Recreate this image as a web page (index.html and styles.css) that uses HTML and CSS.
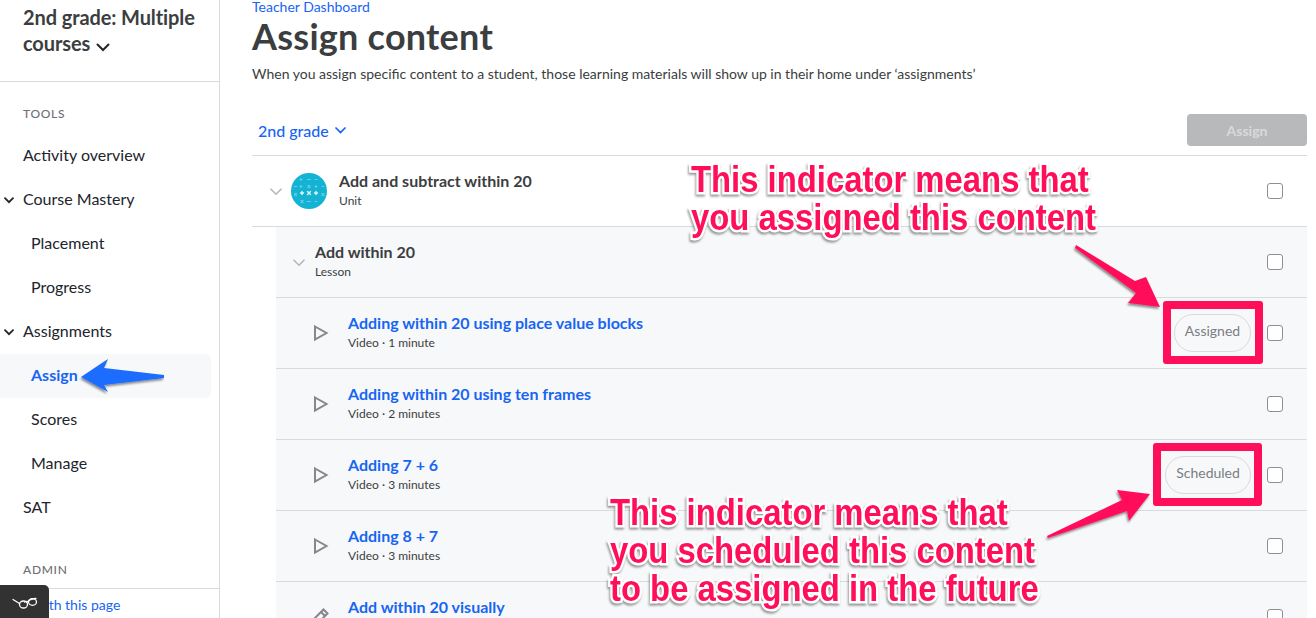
FILE: index.html
```html
<!DOCTYPE html>
<html lang="en">
<head>
<meta charset="utf-8">
<title>Assign content</title>
<link rel="stylesheet" href="styles.css">
</head>
<body>
<div class="page">
  <aside class="sidebar">
    <div class="course">
      <div class="course-name">2nd grade: Multiple courses
        <svg class="course-caret" width="14" height="9" viewBox="0 0 14 9"><path d="M1.500 1.500 7 7l5.500-5.500" fill="none" stroke="#21242c" stroke-width="2" stroke-linecap="round"/></svg>
      </div>
    </div>
    <nav class="nav">
      <div class="nav-heading">TOOLS</div>
      <a class="nav-item">Activity overview</a>
      <a class="nav-item nav-parent"><svg class="nav-caret" width="10" height="7" viewBox="0 0 10 7"><path d="M1 1.200 5 5.200l4-4" fill="none" stroke="#21242c" stroke-width="1.800" stroke-linecap="round"/></svg>Course Mastery</a>
      <a class="nav-item nav-sub">Placement</a>
      <a class="nav-item nav-sub">Progress</a>
      <a class="nav-item nav-parent"><svg class="nav-caret" width="10" height="7" viewBox="0 0 10 7"><path d="M1 1.200 5 5.200l4-4" fill="none" stroke="#21242c" stroke-width="1.800" stroke-linecap="round"/></svg>Assignments</a>
      <a class="nav-item nav-sub nav-active">Assign</a>
      <a class="nav-item nav-sub">Scores</a>
      <a class="nav-item nav-sub">Manage</a>
      <a class="nav-item">SAT</a>
      <div class="nav-heading nav-heading-admin">ADMIN</div>
    </nav>
    <div class="help"><a class="help-link">Help with this page</a></div>
    <div class="glasses">
      <svg width="26" height="14" viewBox="0 0 26 14"><path d="M1 4.500 7.500 8.500M16 7c-1.500-.8-2.500-.8-3.500 0M16 6.500c1.500-1.800 4.500-3 8-3" fill="none" stroke="#fff" stroke-width="1.300" stroke-linecap="round"/><ellipse cx="11.500" cy="9.500" rx="4" ry="3.500" fill="none" stroke="#fff" stroke-width="1.300"/><ellipse cx="20.500" cy="7" rx="4" ry="3.300" fill="none" stroke="#fff" stroke-width="1.300"/></svg>
    </div>
  </aside>

  <main class="main">
    <a class="crumb">Teacher Dashboard</a>
    <h1 class="title">Assign content</h1>
    <p class="desc">When you assign specific content to a student, those learning materials will show up in their home under ‘assignments’</p>
    <div class="toolbar">
      <a class="grade">2nd grade
        <svg width="11" height="7" viewBox="0 0 11 7"><path d="M1 1 5.500 5.500 10 1" fill="none" stroke="#1865f2" stroke-width="1.700" stroke-linecap="round"/></svg>
      </a>
      <button class="assign-btn" type="button">Assign</button>
    </div>
    <div class="rows">
      <div class="row row-unit">
        <svg class="chev" width="12" height="8" viewBox="0 0 12 8"><path d="M1 1.200 6 6.200l5-5" fill="none" stroke="#b4b6b9" stroke-width="1.600" stroke-linecap="round"/></svg>
        <svg class="unit-icon" width="36" height="36" viewBox="0 0 36 36">
          <circle cx="18" cy="18" r="18" fill="#14b2d3"/>
          <g stroke="#62cfe4" stroke-width="1.200" stroke-linecap="round">
            <path d="M16.500 6.500h3M24 6.500h2"/>
            <path d="M10 5.500v2M9 6.500h2"/>
            <path d="M10 12.500v2M9 13.500h2M17 12.500l2 2M19 12.500l-2 2M25 12.500v2M24 13.500h2"/>
            <path d="M3.500 20.500l2 2M5.500 20.500l-2 2M10 27.500l2 2M12 27.500l-2 2M31 20.500l2 2M33 20.500l-2 2"/>
            <path d="M16.500 28.500h3M24 28.500h2"/>
            <path d="M3.500 13.500h2M31 13.500h2"/>
          </g>
          <g stroke="#dff6fa" stroke-width="1.400" stroke-linecap="round">
            <path d="M11 18.500v3M9.500 20h3M16.500 18.500l3 3M19.500 18.500l-3 3M25 18.500v3M23.500 20h3"/>
          </g>
        </svg>
        <div class="row-text"><div class="row-title">Add and subtract within 20</div><div class="row-sub">Unit</div></div>
        <span class="check"></span>
      </div>
      <div class="row row-lesson">
        <svg class="chev" width="12" height="8" viewBox="0 0 12 8"><path d="M1 1.200 6 6.200l5-5" fill="none" stroke="#b4b6b9" stroke-width="1.600" stroke-linecap="round"/></svg>
        <div class="row-text"><div class="row-title">Add within 20</div><div class="row-sub">Lesson</div></div>
        <span class="check"></span>
      </div>
      <div class="row row-item">
        <svg class="kind" width="16" height="18" viewBox="0 0 16 18"><path d="M2 2.500 13.500 9 2 15.500z" fill="none" stroke="#85878b" stroke-width="2"/></svg>
        <div class="row-text"><div class="row-title row-link">Adding within 20 using place value blocks</div><div class="row-sub">Video · 1 minute</div></div>
        <span class="pill pill-assigned">Assigned</span>
        <span class="check"></span>
      </div>
      <div class="row row-item">
        <svg class="kind" width="16" height="18" viewBox="0 0 16 18"><path d="M2 2.500 13.500 9 2 15.500z" fill="none" stroke="#85878b" stroke-width="2"/></svg>
        <div class="row-text"><div class="row-title row-link">Adding within 20 using ten frames</div><div class="row-sub">Video · 2 minutes</div></div>
        <span class="check"></span>
      </div>
      <div class="row row-item">
        <svg class="kind" width="16" height="18" viewBox="0 0 16 18"><path d="M2 2.500 13.500 9 2 15.500z" fill="none" stroke="#85878b" stroke-width="2"/></svg>
        <div class="row-text"><div class="row-title row-link">Adding 7 + 6</div><div class="row-sub">Video · 3 minutes</div></div>
        <span class="pill pill-scheduled">Scheduled</span>
        <span class="check"></span>
      </div>
      <div class="row row-item">
        <svg class="kind" width="16" height="18" viewBox="0 0 16 18"><path d="M2 2.500 13.500 9 2 15.500z" fill="none" stroke="#85878b" stroke-width="2"/></svg>
        <div class="row-text"><div class="row-title row-link">Adding 8 + 7</div><div class="row-sub">Video · 3 minutes</div></div>
        <span class="check"></span>
      </div>
      <div class="row row-item">
        <svg class="kind" width="16" height="18" viewBox="0 0 16 18"><path d="M10.500 1.500 14.500 5.500 6 14l-4-4zM8 4l4 4M2 10l-.5 5.500L6 14" fill="none" stroke="#85878b" stroke-width="2"/></svg>
        <div class="row-text"><div class="row-title row-link">Add within 20 visually</div><div class="row-sub">Exercise</div></div>
        <span class="check"></span>
      </div>
    </div>
  </main>

  <svg class="arrows" width="1316" height="618" viewBox="0 0 1316 618">
    <defs>
      <filter id="shade" x="-30%" y="-30%" width="160%" height="160%"><feDropShadow dx="-1" dy="2" stdDeviation="1.200" flood-color="#000" flood-opacity=".45"/></filter>
    </defs>
    <polygon filter="url(#shade)" fill="#1a6cff" points="81,377 108,359 104,368 164,375 164,378 104,385 108,392"/>
    <polygon filter="url(#shade)" fill="#ff0f5a" points="1076,245 1135,281 1146,277 1160,307 1128,303 1136,293 1075,248"/>
    <polygon filter="url(#shade)" fill="#ff0f5a" points="1047,536 1122,500 1117,490 1150,494 1129,521 1127,511 1048,538"/>
  </svg>
  <div class="mark mark-assigned"></div>
  <div class="mark mark-scheduled"></div>
  <div class="note note-assigned">This indicator means that<br>you assigned this content</div>
  <div class="note note-scheduled">This indicator means that<br>you scheduled this content<br>to be assigned in the future</div>
</div>
</body>
</html>
```
FILE: styles.css
```css
* { box-sizing: border-box; }
html, body { margin: 0; height: 100%; overflow: hidden; }
body { background: #fff; font-family: Lato, "Open Sans", sans-serif; color: #21242c; }
.page { position: relative; display: flex; width: 1316px; height: 618px; overflow: hidden; }

.sidebar { position: relative; flex: none; width: 220px; height: 618px; border-right: 1px solid #d9dadc; display: flex; flex-direction: column; }
.course { height: 82px; border-bottom: 1px solid #d9dadc; padding: 4px 16px 0 23px; }
.course-name { font-size: 20px; line-height: 26px; font-weight: 700; color: #3b3e40; letter-spacing: -.1px; }
.course-caret { margin-left: 1px; vertical-align: -1px; }
.nav { flex: 1; min-height: 0; }
.nav-heading { height: 52px; padding: 24px 0 0 23px; font-size: 12px; line-height: 16px; letter-spacing: .7px; color: #6d6f75; font-weight: 500; }
.nav-heading-admin { height: 58px; padding-top: 32px; }
.nav-item { position: relative; display: block; height: 44px; line-height: 42px; padding-left: 23px; font-size: 16px; color: #21242c; }
.nav-sub { padding-left: 31px; }
.nav-caret { position: absolute; left: 4px; top: 19px; }
.nav-active { width: 211px; color: #1865f2; font-weight: 700; background: #f7f8fa; border-radius: 0 5px 5px 0; }
.help { height: 30px; border-top: 1px solid #d9dadc; padding-left: 2px; font-size: 14px; line-height: 31px; color: #1865f2; white-space: nowrap; }
.glasses { position: absolute; left: 0; bottom: 0; width: 49px; height: 33px; background: #323232; border-radius: 0 5px 0 0; display: flex; align-items: center; justify-content: center; }

.main { flex: none; width: 1087px; margin-left: 32px; }
.crumb { display: block; height: 14px; font-size: 14px; line-height: 14px; color: #1865f2; }
.title { margin: 0; font-size: 36px; line-height: 44px; font-weight: 700; color: #3b3e40; letter-spacing: .25px; }
.desc { margin: 6px 0 0; font-size: 14px; line-height: 20px; color: #3b3e40; }
.toolbar { display: flex; align-items: center; justify-content: space-between; height: 40px; margin-top: 26px; width: 1055px; padding-left: 6px; }
.grade { font-size: 16px; color: #1865f2; font-weight: 500; display: flex; align-items: center; gap: 6px; }
.assign-btn { width: 120px; height: 32px; border: 0; border-radius: 4px; background: #b8b9ba; color: #d8d9da; font: 700 14px Lato, sans-serif; }
.rows { width: 1055px; border-top: 1px solid #d9dadc; margin-top: 5px; }
.row { display: flex; align-items: center; height: 71px; border-bottom: 1px solid #d9dadc; padding-right: 24px; background: #f7f8fa; margin-left: 24px; }
.row-unit { background: #fff; margin-left: 0; padding-left: 18px; }
.row-lesson { padding-left: 17px; }
.row-item { padding-left: 37px; }
.chev { flex: none; margin-top: 1px; }
.unit-icon { flex: none; margin-left: 9px; }
.row-lesson .row-text { margin-left: 10px; }
.row-unit .row-text { margin-left: 12px; }
.kind { flex: none; margin-right: 19px; }
.row-text { flex: 1; min-width: 0; margin-top: -3px; }
.row-title { font-size: 16px; line-height: 22px; font-weight: 700; color: #3b3e40; }
.row-link { color: #1865f2; }
.row-sub { font-size: 12px; line-height: 16px; margin-top: 1px; color: #3b3e40; }
.check { flex: none; width: 16px; height: 16px; background: #fff; border: 1px solid #8d8f93; border-radius: 3px; }
.pill { flex: none; height: 38px; line-height: 31px; border: 1px solid #d9dadc; border-radius: 19px; margin-right: 16px; text-align: center; font-size: 14px; color: #7b7d83; background: #f7f8fa; }
.pill-assigned { width: 77px; }
.pill-scheduled { width: 86px; }

.arrows { position: absolute; left: 0; top: 0; pointer-events: none; }
.mark { position: absolute; border: 8px solid #ff0f5a; border-radius: 3px; }
.mark-assigned { left: 1163px; top: 301px; width: 100px; height: 63px; }
.mark-scheduled { left: 1153px; top: 443px; width: 109px; height: 63px; }
.note { position: absolute; font-family: "Liberation Sans", Arial, sans-serif; font-weight: 700; font-size: 36px; line-height: 38px; color: #ff0f5a; white-space: nowrap; -webkit-text-stroke: 5px #fff; paint-order: stroke fill; filter: drop-shadow(-1px 2px 1px rgba(0,0,0,.4)); transform: scaleX(.912); transform-origin: left top; }
.note-assigned { left: 691px; top: 161px; }
.note-scheduled { left: 610px; top: 494px; }
```
